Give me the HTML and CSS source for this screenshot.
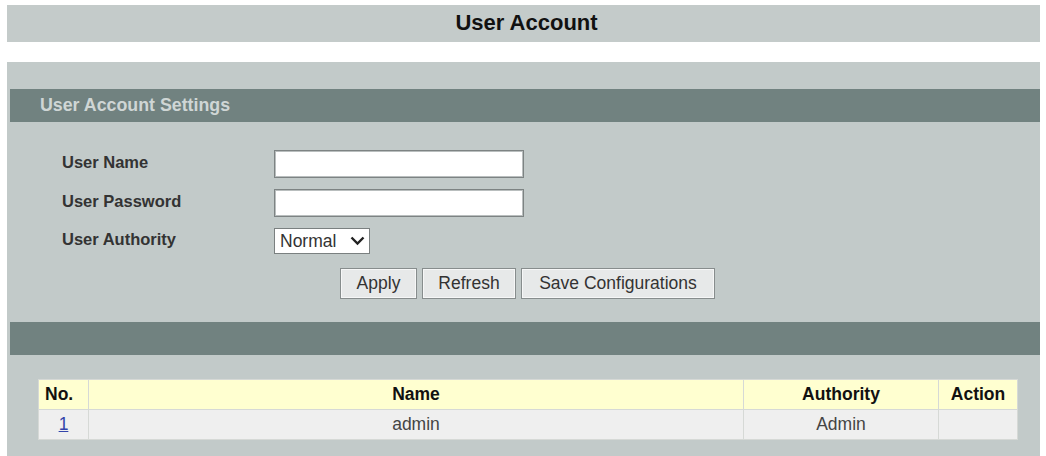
FILE: index.html
```html
<!DOCTYPE html>
<html>
<head>
<meta charset="utf-8">
<title>User Account</title>
<link rel="stylesheet" href="styles.css">
</head>
<body>
<div class="page">
  <div class="titlebar">User Account</div>
  <div class="panel">
    <div class="section-head">User Account Settings</div>
    <div class="form">
      <label class="lbl" for="un">User Name</label>
      <input class="txt" id="un" type="text">
      <label class="lbl" for="pw">User Password</label>
      <input class="txt" id="pw" type="password">
      <label class="lbl" for="au">User Authority</label>
      <span class="sel-wrap">
        <select class="sel" id="au"><option>Normal</option><option>Admin</option></select>
        <svg class="chev" width="15" height="10" viewBox="0 0 15 10"><path d="M1.5 1.5 L7.5 7.5 L13.5 1.5" fill="none" stroke="#222" stroke-width="2.4"/></svg>
      </span>
    </div>
    <div class="buttons">
      <button class="btn btn-apply">Apply</button>
      <button class="btn btn-refresh">Refresh</button>
      <button class="btn btn-save">Save Configurations</button>
    </div>
    <div class="section-head empty"></div>
    <table class="users">
      <colgroup>
        <col class="w-no"><col class="w-name"><col class="w-auth"><col class="w-act">
      </colgroup>
      <thead>
        <tr><th class="c-no">No.</th><th>Name</th><th>Authority</th><th>Action</th></tr>
      </thead>
      <tbody>
        <tr><td><a href="#">1</a></td><td>admin</td><td>Admin</td><td></td></tr>
      </tbody>
    </table>
  </div>
</div>
</body>
</html>
```
FILE: styles.css
```css
html, body {
  margin: 0;
  padding: 0;
  background: #ffffff;
  font-family: "Liberation Sans", Arial, sans-serif;
}
.page {
  padding: 5px 6px 0 7px;
}
.titlebar {
  height: 37px;
  background: #c4cbca;
  color: #111;
  font-weight: bold;
  font-size: 22px;
  text-align: center;
  line-height: 36px;
  padding-left: 6px;
}
.panel {
  margin-top: 20px;
  background: #c2cac9;
  padding: 27px 0 17px 3px;
}
.section-head {
  height: 33px;
  background: #718280;
  color: #cfd6d5;
  font-weight: bold;
  font-size: 17.8px;
  line-height: 33px;
  padding-left: 30px;
}
.form {
  display: grid;
  grid-template-columns: 212px auto;
  row-gap: 11px;
  padding: 28px 0 0 52px;
  align-items: center;
  justify-items: start;
}
.lbl {
  font-weight: bold;
  font-size: 16.5px;
  color: #333;
  margin-top: -4px;
}
.txt {
  box-sizing: border-box;
  width: 250px;
  height: 28px;
  margin: 0;
  background: #fff;
  border: 1px solid #7d8383;
  box-shadow: inset 0 0 0 1px #b9bebe;
}
.sel-wrap {
  position: relative;
  display: inline-block;
}
.sel {
  appearance: none;
  -webkit-appearance: none;
  box-sizing: border-box;
  width: 96px;
  height: 26px;
  margin: 0;
  padding: 0 0 0 5px;
  background: #fff;
  border: 1px solid #7a8080;
  border-radius: 0;
  font-family: "Liberation Sans", Arial, sans-serif;
  font-size: 17.5px;
  color: #333;
}
.chev {
  position: absolute;
  right: 5px;
  top: 8px;
  pointer-events: none;
}
.buttons {
  display: flex;
  gap: 5px;
  padding: 14px 0 0 330px;
  margin-bottom: 23px;
}
.btn {
  box-sizing: border-box;
  height: 31px;
  margin: 0;
  padding: 0;
  background: #e7e9e9;
  border: 1px solid #878d8d;
  box-shadow: inset 0 0 0 1px #f6f7f7;
  border-radius: 0;
  font-family: "Liberation Sans", Arial, sans-serif;
  font-size: 17.5px;
  color: #333;
}
.btn-apply { width: 77px; }
.btn-refresh { width: 94px; }
.btn-save { width: 194px; }
.users {
  margin: 24px 0 0 28px;
  width: 979px;
  table-layout: fixed;
  border-collapse: collapse;
  font-size: 17.5px;
}
.w-no { width: 50px; }
.w-name { width: 655px; }
.w-auth { width: 195px; }
.w-act { width: 79px; }
.users th, .users td {
  height: 29px;
  padding: 0;
  text-align: center;
  border: 1px solid #d6d9d6;
}
.users th {
  background: #ffffd0;
  color: #111;
  font-weight: bold;
}
.users td {
  background: #efefef;
  color: #444;
}
.users th.c-no {
  text-align: left;
  padding-left: 6px;
}
.users td a {
  color: #3344aa;
  text-decoration: underline;
}
```
